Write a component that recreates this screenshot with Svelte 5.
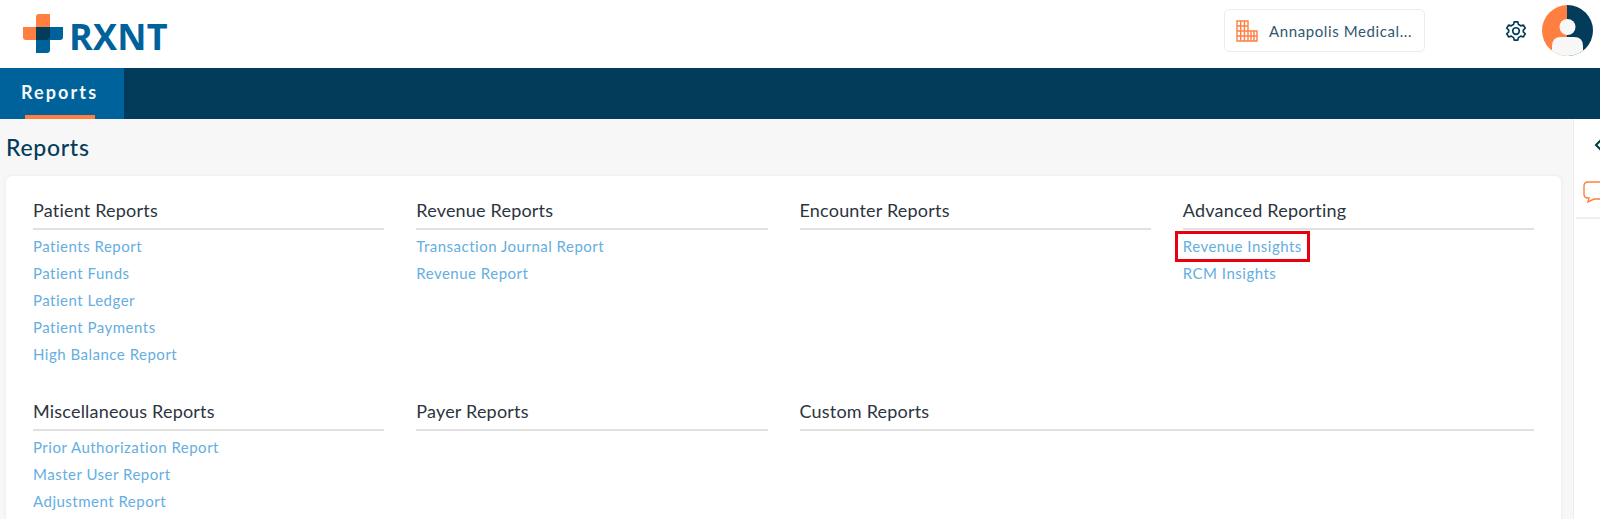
<script>
	const sections = [
		{ title: 'Patient Reports', links: ['Patients Report', 'Patient Funds', 'Patient Ledger', 'Patient Payments', 'High Balance Report'] },
		{ title: 'Revenue Reports', links: ['Transaction Journal Report', 'Revenue Report'] },
		{ title: 'Encounter Reports', links: [] },
		{ title: 'Advanced Reporting', links: ['Revenue Insights', 'RCM Insights'] },
		{ title: 'Miscellaneous Reports', links: ['Prior Authorization Report', 'Master User Report', 'Adjustment Report'] },
		{ title: 'Payer Reports', links: [] },
		{ title: 'Custom Reports', links: [], wide: true }
	]
</script>

<div class="page">
	<header class="topbar">
		<div class="logo">
			<svg width="41" height="39" viewBox="0 0 41 39">
				<path d="M16 0 H27 V26 H3 Q0 26 0 23 V13 H13 V3 Q13 0 16 0 Z" fill="#ff7f41" />
				<path d="M13 13 H40 V23 Q40 26 37 26 H27 V36 Q27 39 24 39 H13 Z" fill="#00629b" />
				<path d="M13 13 H27 V23 Q27 26 24 26 H13 Z" fill="#033c5a" />
			</svg>
			<span class="wordmark">RXNT</span>
		</div>
		<div class="top-right">
			<div class="practice">
				<svg class="building" width="22" height="22" viewBox="0 0 22 22" fill="none" stroke="#ff7f41" stroke-width="1.4">
					<path d="M1 1 H12 V11 H21 V21 H1 Z" />
					<path d="M4.7 1 V21 M8.4 1 V21 M12 11 V21 M15 11 V21 M18 11 V21 M1 6 H12 M1 11 H12 M1 16 H21" />
				</svg>
				<span>Annapolis Medical...</span>
			</div>
			<svg class="gear" width="22" height="22" viewBox="0 0 24 24" fill="none" stroke="#033c5a" stroke-width="1.8" stroke-linejoin="round">
				<path d="M10 2 H14 L14.7 5 Q16 5.5 17.2 6.4 L20.1 5.5 L22.1 9 L19.9 11 Q20.1 12 19.9 13 L22.1 15 L20.1 18.5 L17.2 17.6 Q16 18.5 14.7 19 L14 22 H10 L9.3 19 Q8 18.5 6.8 17.6 L3.9 18.5 L1.9 15 L4.1 13 Q3.9 12 4.1 11 L1.9 9 L3.9 5.5 L6.8 6.4 Q8 5.5 9.3 5 Z" />
				<circle cx="12" cy="12" r="3.6" />
			</svg>
			<svg class="avatar" width="51" height="51" viewBox="0 0 51 51">
				<defs>
					<clipPath id="round"><circle cx="25.5" cy="25.5" r="25.5" /></clipPath>
				</defs>
				<g clip-path="url(#round)">
					<rect width="26" height="51" fill="#ff7f41" />
					<rect x="25" width="26" height="51" fill="#033c5a" />
					<circle cx="25.5" cy="22" r="8" fill="#f7f7f7" />
					<path d="M10 51 V41 Q10 32 19 32 H32 Q41 32 41 41 V51 Z" fill="#f7f7f7" />
				</g>
			</svg>
		</div>
	</header>

	<nav class="navbar">
		<div class="tab">Reports</div>
	</nav>

	<div class="body">
		<main class="content">
			<h1>Reports</h1>
			<div class="card">
				{#each sections as section}
					<section class:wide={section.wide}>
						<h2>{section.title}</h2>
						<ul>
							{#each section.links as link}
								<li><span class="link" class:marked={link === 'Revenue Insights'}>{link}</span></li>
							{/each}
						</ul>
					</section>
				{/each}
			</div>
		</main>
		<aside class="side">
			<svg class="chevron" width="10" height="12" viewBox="0 0 10 12" fill="none" stroke="#033c3a" stroke-width="2">
				<path d="M7 1 L2 6 L7 11" />
			</svg>
			<div class="chat">
				<svg width="27" height="24" viewBox="0 0 27 24" fill="none" stroke="#ff7f41" stroke-width="1.4">
					<path d="M27 1 H5 Q1 1 1 5 V13 Q1 17 5 17 H6 L5 21 L11 18 H27" />
				</svg>
			</div>
		</aside>
	</div>
</div>

<style>
	:global(body) {
		margin: 0;
		font-family: 'Lato', 'Open Sans', sans-serif;
		background: #fff;
	}
	.page {
		width: 1600px;
		height: 519px;
		overflow: hidden;
		display: flex;
		flex-direction: column;
	}
	.topbar {
		height: 68px;
		flex: none;
		display: flex;
		justify-content: space-between;
		align-items: center;
		background: #fff;
	}
	.logo {
		display: flex;
		align-items: center;
		margin-left: 23px;
		margin-bottom: 1px;
		gap: 5px;
	}
	.wordmark {
		font-family: 'Open Sans', sans-serif;
		font-weight: 700;
		font-size: 36px;
		line-height: 30px;
		color: #00629b;
		letter-spacing: 0.2px;
		margin-top: 7px;
	}
	.top-right {
		display: flex;
		align-items: center;
		margin: 0 7px 7px 0;
	}
	.practice {
		width: 201px;
		height: 43px;
		box-sizing: border-box;
		border: 1px solid #ececec;
		border-radius: 5px;
		display: flex;
		align-items: center;
		padding-left: 11px;
		gap: 11px;
		font-size: 15px;
		letter-spacing: 0.6px;
		color: #33566f;
		margin-right: 80px;
	}
	.building {
		flex: none;
	}
	.gear {
		margin-right: 15px;
	}
	.navbar {
		height: 51px;
		flex: none;
		background: #033c5a;
		display: flex;
	}
	.tab {
		width: 124px;
		box-sizing: border-box;
		background: #00629b;
		color: #f5f8fa;
		font-weight: 700;
		font-size: 18px;
		letter-spacing: 2.1px;
		padding: 13px 0 0 21px;
		position: relative;
	}
	.tab::after {
		content: '';
		position: absolute;
		left: 25px;
		bottom: 0;
		width: 70px;
		height: 4px;
		background: #ff7f41;
	}
	.body {
		flex: 1;
		display: flex;
		min-height: 0;
	}
	.content {
		width: 1573px;
		flex: none;
		box-sizing: border-box;
		background: #f7f7f7;
		padding: 0 12px 0 6px;
	}
	h1 {
		margin: 0;
		padding-top: 15px;
		height: 42px;
		font-size: 23px;
		line-height: 26px;
		font-weight: 500;
		letter-spacing: 0.7px;
		color: #033c5a;
	}
	.card {
		background: #fff;
		border-radius: 6px;
		box-shadow: 0 0 4px rgba(0, 0, 0, 0.06);
		padding: 22px 27px 40px 27px;
		display: grid;
		grid-template-columns: repeat(4, 1fr);
		column-gap: 32px;
		height: 400px;
		box-sizing: border-box;
		align-content: start;
	}
	section {
		min-height: 201px;
	}
	.wide {
		grid-column: span 2;
	}
	h2 {
		margin: 0;
		font-size: 18px;
		line-height: 24px;
		font-weight: 400;
		letter-spacing: 0.2px;
		color: #2c3440;
		padding-bottom: 6px;
		border-bottom: 2px solid #e1e1e1;
	}
	ul {
		list-style: none;
		margin: 3px 0 0;
		padding: 0;
	}
	li {
		height: 27px;
		line-height: 27px;
		font-size: 15px;
		letter-spacing: 0.5px;
		color: #65aee0;
	}
	.link {
		display: inline-block;
		position: relative;
	}
	.marked::after {
		content: '';
		position: absolute;
		left: -8px;
		right: -8px;
		top: -2px;
		height: 31px;
		box-sizing: border-box;
		border: 3px solid #e8000f;
	}
	.side {
		flex: 1;
		background: #fff;
		box-shadow: inset 1px 0 0 #ececec;
		display: flex;
		flex-direction: column;
		overflow: hidden;
		padding-left: 1px;
	}
	.chevron {
		margin: 20px 0 0 20px;
		flex: none;
	}
	.chat {
		margin: 30px 0 0 2px;
		height: 36px;
		padding-left: 7px;
		border-bottom: 2px solid #efefef;
		flex: none;
	}
</style>
